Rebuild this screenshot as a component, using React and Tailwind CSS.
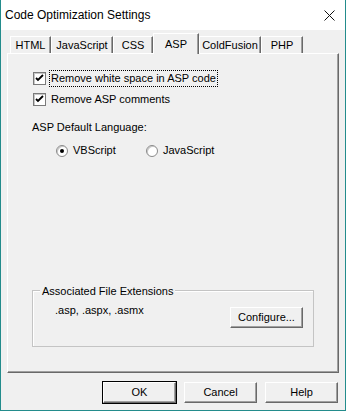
const tabs = [
  { label: 'HTML', cls: 'w-[41px]' },
  { label: 'JavaScript', cls: 'w-[62px]' },
  { label: 'CSS', cls: 'w-[40px]' },
  { label: 'ASP', cls: 'w-[46px]', active: true },
  { label: 'ColdFusion', cls: 'w-[62px]' },
  { label: 'PHP', cls: 'w-[42px]' },
]

function Checkbox({ label, focused }) {
  return (
    <div className="flex h-[17px] items-center">
      <span className="flex h-[13px] w-[13px] items-center justify-center border border-[#7a7a7a] bg-white shadow-[inset_1px_1px_0_#c8c8c8]">
        <svg width="9" height="9" viewBox="0 0 9 9">
          <path d="M1 4 L3 6 L8 1" fill="none" stroke="#000" strokeWidth="1.8" />
        </svg>
      </span>
      <span
        className={
          focused
            ? 'ml-[3px] border border-dotted border-black px-[1px] leading-[15px]'
            : 'ml-[4px] px-[1px] leading-[15px]'
        }
      >
        {label}
      </span>
    </div>
  )
}

function Radio({ label, checked, cls }) {
  return (
    <div className={`flex items-center ${cls}`}>
      <span className="flex h-[12px] w-[12px] items-center justify-center rounded-full border border-[#8a8a8a] bg-white shadow-[inset_1px_1px_0_#c8c8c8]">
        {checked ? <span className="h-[4px] w-[4px] rounded-full bg-black" /> : null}
      </span>
      <span className="ml-[5px]">{label}</span>
    </div>
  )
}

function Button({ label, isDefault }) {
  return (
    <button
      type="button"
      className={
        (isDefault ? 'border border-black ' : 'border border-transparent ') +
        'h-[23px] w-[75px] shrink-0 bg-transparent p-0'
      }
    >
      <span className="flex h-full w-full items-center justify-center border-t border-l border-t-white border-l-white border-r border-b border-r-[#696969] border-b-[#696969] bg-[#f0f0f0] shadow-[inset_-1px_-1px_0_#a0a0a0]">
        {label}
      </span>
    </button>
  )
}

export default function App() {
  return (
    <div
      className="flex h-[411px] w-[346px] flex-col border-x border-b border-[#238c8c] bg-[#f0f0f0] text-[11px] text-black"
      style={{ fontFamily: '"Liberation Sans", Arial, sans-serif' }}
    >
      <div className="flex h-[30px] shrink-0 items-center justify-between bg-white pl-[4px] pr-[10px]">
        <span className="text-[12px]">Code Optimization Settings</span>
        <svg width="11" height="11" viewBox="0 0 11 11">
          <path d="M0.5 0.5 L10.5 10.5 M10.5 0.5 L0.5 10.5" stroke="#111" strokeWidth="1" />
        </svg>
      </div>

      <div className="flex flex-1 flex-col px-[6px] pt-[3px]">
        <div className="relative z-10 ml-[3px] flex h-[20px] items-end">
          {tabs.map((tab) =>
            tab.active ? (
              <div
                key={tab.label}
                className={`${tab.cls} -mb-px flex h-[21px] items-start justify-center border-t border-l border-white border-r border-r-[#696969] bg-[#f0f0f0] pt-[2px] shadow-[inset_-1px_0_0_#a0a0a0]`}
              >
                {tab.label}
              </div>
            ) : (
              <div
                key={tab.label}
                className={`${tab.cls} flex h-[17px] items-center justify-center border-t border-l border-white border-r border-r-[#696969] shadow-[inset_-1px_0_0_#a0a0a0]`}
              >
                {tab.label}
              </div>
            )
          )}
        </div>

        <div className="flex h-[320px] flex-col border-t border-l border-white border-r border-b border-r-[#696969] border-b-[#696969] px-[24px] pt-[16px] pb-[25px] shadow-[inset_-1px_-1px_0_#a0a0a0]">
          <div className="ml-[1px] flex flex-col gap-[4px]">
            <Checkbox label="Remove white space in ASP code" focused />
            <Checkbox label="Remove ASP comments" />
          </div>

          <div className="mt-[13px] leading-[13px]">ASP Default Language:</div>

          <div className="mt-[10px] ml-[24px] flex h-[13px] items-center">
            <Radio label="VBScript" checked cls="w-[90px]" />
            <Radio label="JavaScript" />
          </div>

          <div className="relative mt-auto flex h-[57px] items-start justify-between border border-[#c4c4c4] pt-[15px] pr-[9px] pl-[22px] shadow-[inset_1px_1px_0_#fff]">
            <span className="absolute -top-[8px] left-[7px] bg-[#f0f0f0] px-[2px]">
              Associated File Extensions
            </span>
            <span className="-mt-[2px] leading-[13px]">.asp, .aspx, .asmx</span>
            <Button label="Configure..." />
          </div>
        </div>

        <div className="mt-[8px] flex justify-end gap-[6px]">
          <Button label="OK" isDefault />
          <Button label="Cancel" />
          <Button label="Help" />
        </div>
      </div>
    </div>
  )
}
